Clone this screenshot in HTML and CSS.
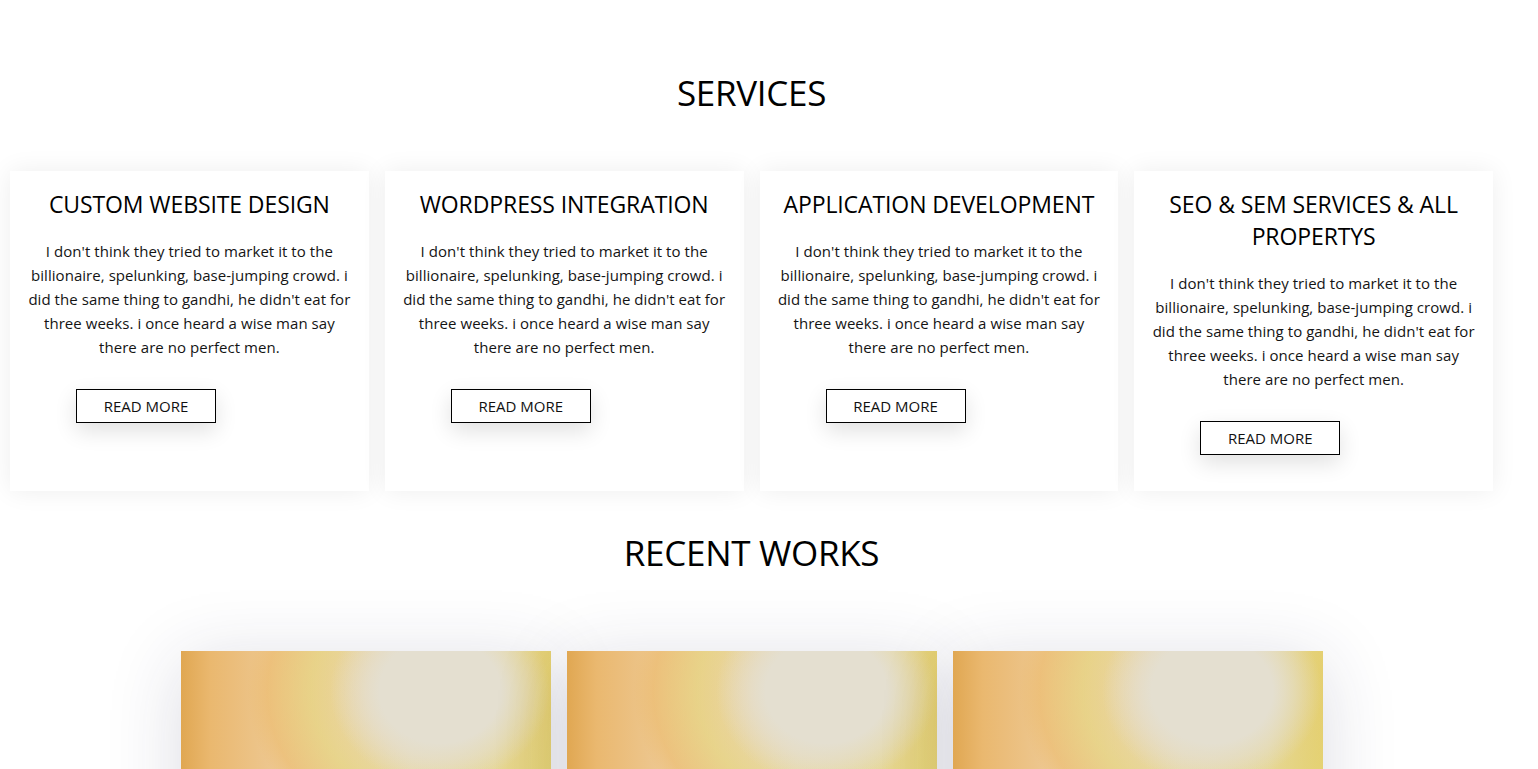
FILE: index.html
```html
<!DOCTYPE html>
<html lang="en">
<head>
<meta charset="utf-8">
<title>Services</title>
<link rel="stylesheet" href="styles.css">
</head>
<body>
<div class="page">
  <section class="services">
    <h2 class="section-title">SERVICES</h2>
    <div class="cards">
      <div class="card">
        <h3 class="card-title">CUSTOM WEBSITE DESIGN</h3>
        <p class="card-text">I don't think they tried to market it to the billionaire, spelunking, base-jumping crowd. i did the same thing to gandhi, he didn't eat for three weeks. i once heard a wise man say there are no perfect men.</p>
        <div class="card-action"><a class="btn" href="#">READ MORE</a></div>
      </div>
      <div class="card">
        <h3 class="card-title">WORDPRESS INTEGRATION</h3>
        <p class="card-text">I don't think they tried to market it to the billionaire, spelunking, base-jumping crowd. i did the same thing to gandhi, he didn't eat for three weeks. i once heard a wise man say there are no perfect men.</p>
        <div class="card-action"><a class="btn" href="#">READ MORE</a></div>
      </div>
      <div class="card">
        <h3 class="card-title">APPLICATION DEVELOPMENT</h3>
        <p class="card-text">I don't think they tried to market it to the billionaire, spelunking, base-jumping crowd. i did the same thing to gandhi, he didn't eat for three weeks. i once heard a wise man say there are no perfect men.</p>
        <div class="card-action"><a class="btn" href="#">READ MORE</a></div>
      </div>
      <div class="card">
        <h3 class="card-title">SEO &amp; SEM SERVICES &amp; ALL PROPERTYS</h3>
        <p class="card-text">I don't think they tried to market it to the billionaire, spelunking, base-jumping crowd. i did the same thing to gandhi, he didn't eat for three weeks. i once heard a wise man say there are no perfect men.</p>
        <div class="card-action"><a class="btn" href="#">READ MORE</a></div>
      </div>
    </div>
  </section>
  <section class="works">
    <h2 class="section-title works-title">RECENT WORKS</h2>
    <div class="work-grid">
      <div class="work"></div>
      <div class="work"></div>
      <div class="work"></div>
    </div>
  </section>
</div>
</body>
</html>
```
FILE: styles.css
```css
html, body {
  margin: 0;
  padding: 0;
  background: #ffffff;
}
body {
  font-family: "Open Sans", "Noto Sans", sans-serif;
  color: #111111;
  overflow: hidden;
}
.page {
  padding: 0 45px 0 10px;
}
.section-title {
  margin: 71px 0 0;
  font-size: 35px;
  font-weight: 400;
  line-height: 43px;
  text-align: center;
  color: #000;
  letter-spacing: -0.3px;
}
.cards {
  margin-top: 57px;
  display: grid;
  grid-template-columns: repeat(4, 1fr);
  gap: 16px;
}
.card {
  background: #fff;
  box-shadow: 0 0 24px rgba(0, 0, 0, 0.07);
  padding: 17px 16px 36px;
  display: flex;
  flex-direction: column;
  text-align: center;
}
.card-title {
  margin: 0;
  font-size: 23px;
  font-weight: 400;
  line-height: 32px;
  color: #000;
  letter-spacing: -0.1px;
}
.card-text {
  margin: 19px 0 0;
  font-size: 15px;
  line-height: 24px;
  color: #141414;
  letter-spacing: 0.05px;
}
.card-action {
  margin-top: 30px;
  padding-left: 50px;
  display: flex;
}
.btn {
  display: block;
  box-sizing: border-box;
  width: 140px;
  height: 34px;
  line-height: 32px;
  border: 1px solid #000;
  text-align: center;
  font-size: 15px;
  color: #111;
  text-decoration: none;
  background: #fff;
  box-shadow: 0 8px 22px rgba(0, 0, 0, 0.12);
}
.works-title {
  margin-top: 40px;
}
.work-grid {
  margin-top: 77px;
  display: flex;
  justify-content: center;
  gap: 16px;
}
.work {
  width: 370px;
  height: 300px;
  flex: none;
  background:
    radial-gradient(ellipse 110px 95px at 70% 40px, rgba(228, 223, 208, 1) 0, rgba(228, 223, 208, 1) 55%, rgba(228, 223, 208, 0) 100%),
    radial-gradient(ellipse 200px 170px at 72% 40px, rgba(229, 216, 130, 0) 40%, rgba(229, 214, 120, 0.55) 68%, rgba(236, 185, 100, 0.45) 90%, rgba(236, 180, 95, 0) 100%),
    linear-gradient(90deg, #e0a752 0%, #eab86f 8%, #edc790 25%, #ebd2a4 42%, #e8dab4 62%, #e6d8a0 85%, #e4cd6e 100%);
  box-shadow: 0 10px 70px rgba(40, 40, 80, 0.16);
}
```
